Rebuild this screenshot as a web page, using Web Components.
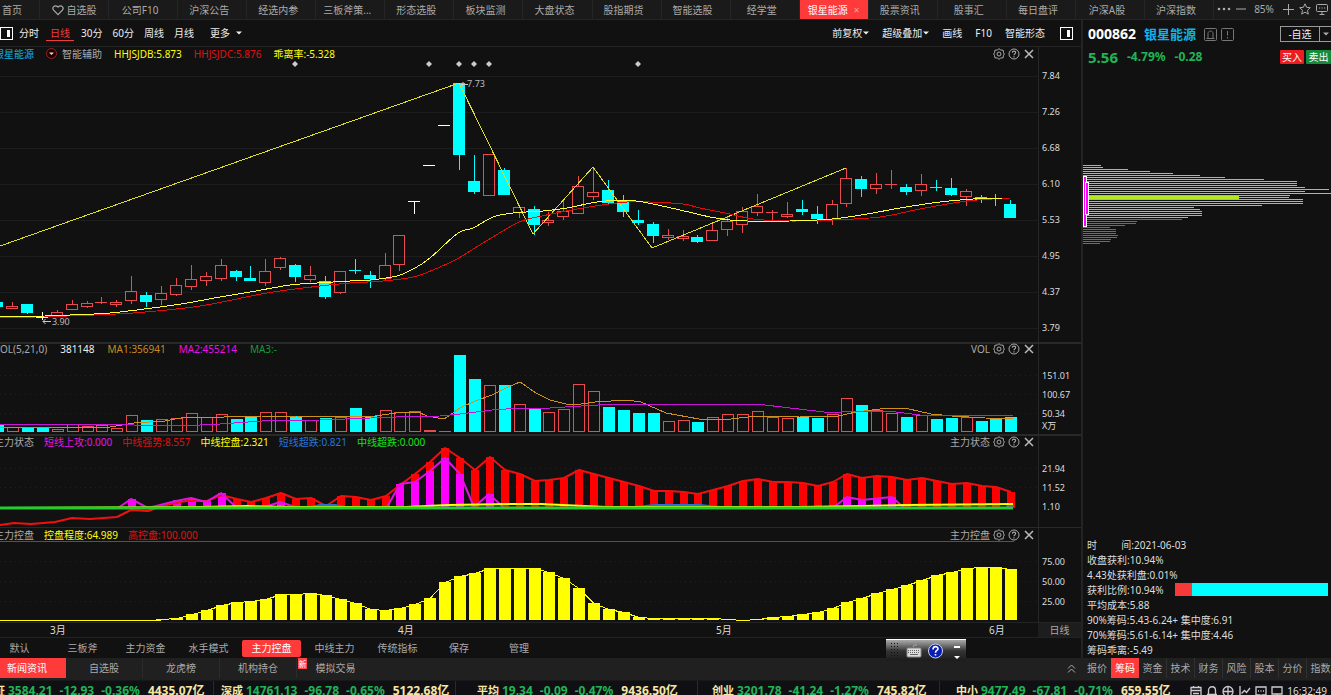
<!DOCTYPE html>
<html lang="zh-CN">
<head>
<meta charset="utf-8">
<title>银星能源 000862</title>
<style>
html,body{height:100%}
body{margin:0;background:#111;color:#aaa;font:10px/12px "Noto Sans","Noto Sans CJK SC",sans-serif;overflow:hidden}
</style>
</head>
<body>
<stock-app></stock-app>
<script>
const BTN='button{font:inherit;color:inherit;background:none;border:0;padding:0;margin:0;white-space:nowrap;cursor:pointer}svg{display:block}';
class Base extends HTMLElement{
  constructor(){super();this.attachShadow({mode:'open'}).innerHTML=`<style>*{box-sizing:border-box}${BTN}${this.css()}</style>${this.html()}`;}
}

/* ---------- top tab strip ---------- */
customElements.define('tab-strip',class extends Base{
  css(){return `:host{display:flex;height:20px;background:#1a1a1a;border-bottom:1px solid #252525;color:#aaa}
  button{flex:1 1 0;min-width:0;display:flex;align-items:center;justify-content:center;gap:3px;border-left:1px solid #252525;overflow:hidden;padding-right:6px}
  button.home{flex:0 0 39px;justify-content:flex-start;padding:0 0 0 2px;border:0}
  button.fav{padding:0 3px}
  button.on{background:#fe3a3a;color:#fff;gap:6px;padding:0 3px}
  .x{color:#f9a5a5}
  .tools{flex:0 0 118px;display:flex;align-items:center;justify-content:space-between;padding:0 3px 2px 3px;border-left:1px solid #252525}
  .zoom{margin-right:4px}`}
  html(){
    const names=['公司F10','沪深公告','经选内参','三板斧策...','形态选股','板块监测','大盘状态','股指期货','智能选股','经学堂','*银星能源','股票资讯','股事汇','每日盘评','沪深A股','沪深指数'];
    return `<button class="home">首页</button><button class="fav"><svg width="12" height="12" viewBox="0 0 12 12" fill="none" stroke="#aaa" stroke-width="1.2"><path d="M6 10.6 1.6 6.2C-.4 3.6 2.400.2 6 3 9.600.2 12.400 3.600 10.400 6.200Z"/></svg>自选股</button>`+
    names.map(n=>n[0]=='*'?`<button class="on">${n.slice(1)}<span class="x">×</span></button>`:`<button>${n}</button>`).join('')+
    `<div class="tools"><svg width="32" height="12" viewBox="0 0 32 12" fill="#aaa"><circle cx="2" cy="6" r="1.300"/><circle cx="7" cy="6" r="1.300"/><circle cx="12" cy="6" r="1.300"/><path d="M19 5.500h10v1H19z"/></svg><span class="zoom">85%</span>
    <svg width="11" height="12" viewBox="0 0 11 12" stroke="#aaa"><path d="M0 6.500h11M5.500 1v11"/></svg>
    <svg width="12" height="12" viewBox="0 0 12 12" fill="none" stroke="#aaa"><path d="M6 .8l1.600 3.500 3.700.4-2.800 2.600.8 3.800L6 9.200l-3.300 1.900.8-3.800L.7 4.700l3.700-.4z"/></svg>
    <svg width="12" height="12" viewBox="0 0 12 12" fill="none" stroke="#aaa"><rect x=".5" y="1.500" width="11" height="7" rx="1"/><path d="M3.500 11.500h5M6 8.500v3M3 5h1.200M5.500 5h1.200M8 5h1.200"/></svg></div>`}
});

/* ---------- period toolbar ---------- */
const SPLIT='<svg width="13" height="13" viewBox="0 0 13 13"><rect x=".5" y=".5" width="12" height="12" fill="none" stroke="#fff"/><path d="M7 3h3v7H7z" fill="#fff"/></svg>';
const CARET='<svg width="6" height="4" viewBox="0 0 6 4"><path d="M0 .5h6L3 3.500z" fill="currentColor"/></svg>';
customElements.define('chart-toolbar',class extends Base{
  css(){return `:host{display:flex;height:27px;align-items:center;background:#111;border-bottom:1px solid #242424;color:#eee;padding-right:8px}
  button{height:15px;margin-right:10px;display:flex;align-items:center;gap:1px}
  .split{margin-right:6px}
  .on{color:#f03c3c;border-bottom:1px solid #f03c3c;padding:0 4px;margin:0 7px 0 -3px}
  .more{gap:6px;margin-left:6px}
  .gap{flex:1}
  .r button{margin:0 0 0 13px}.r{display:flex;align-items:center}
  .r .last{margin-left:15px}`}
  html(){return `<button class="split" aria-label="左侧栏">${SPLIT}</button><button>分时</button><button class="on">日线</button><button>30分</button><button>60分</button><button>周线</button><button>月线</button><button class="more">更多${CARET}</button><span class="gap"></span><span class="r"><button>前复权${CARET}</button><button>超级叠加${CARET}</button><button>画线</button><button>F10</button><button>智能形态</button><button class="last" aria-label="右侧栏">${SPLIT}</button></span>`}
});

/* ---------- a chart panel: legend over a plot, and a value axis ---------- */
customElements.define('chart-panel',class extends Base{
  css(){return `:host{display:grid;grid-template-columns:minmax(0,1fr) 43px;flex:none;min-height:0;border-top:var(--rule,0) solid #292929}
  .plot,.head{grid-area:1/1;min-width:0;min-height:0}
  .plot{display:flex}
  .head{display:flex;height:var(--head,13px);justify-content:space-between;z-index:1;padding-right:3px}
  .legend{display:flex;align-items:center;gap:var(--gap,10px);margin-left:-6px;white-space:nowrap}
  .tools{display:flex;align-items:center;gap:3px}
  .axis{grid-area:1/2;border-left:1px solid #272727;padding-left:3px;color:#ddd;font-size:9px;overflow:hidden}`}
  html(){return `<div class="plot"><slot></slot></div><div class="head"><div class="legend"><slot name="legend"></slot></div><div class="tools"><slot name="name"></slot>
  <button aria-label="设置"><svg width="12" height="12" viewBox="0 0 12 12" fill="none" stroke="#aaa"><path d="M6 .7l1.500 1.200 2.700.4.4 2.400L11.300 6l-.8 1.500-.4 2.300-2.500.3L6 11.300l-1.500-1.200-2.600-.3-.4-2.300L.7 6l.8-1.300.4-2.400 2.600-.4z"/><circle cx="6" cy="6" r="2"/></svg></button>
  <button aria-label="帮助"><svg width="12" height="12" viewBox="0 0 12 12" fill="none" stroke="#aaa"><circle cx="6" cy="6" r="5"/><path d="M4.300 4.700C4.300 2.500 7.700 2.600 7.700 4.600 7.700 5.800 6 5.800 6 7.200M6 8.200v1.200" stroke-width="1.100"/></svg></button>
  <button aria-label="关闭"><svg width="12" height="12" viewBox="0 0 12 12" stroke="#bbb" stroke-width="1.500"><path d="M2 2l8 8M10 2l-8 8"/></svg></button></div></div><div class="axis"><slot name="axis"></slot></div>`}
});

/* Trading days are 14.9 units apart; day 0 is the 7.73 peak. */
const X=k=>Math.round(459+14.9*k);
/* kind, high, body top, body bottom, low */
const CANDLES=`C302,302,307,307 R302,306,309,309 C304,304,313,314 W312,317,317,320 R310,312,317,317 R300,304,310,310 R301,303,307,308 R297,302,303,304 R300,302,305,307 R276,291,301,304 C292,295,302,307 R286,293,300,305 R278,285,295,296 R265,279,287,290 R272,276,281,286 R259,265,279,281 C270,271,277,281 C266,278,281,281 R259,271,283,286 R257,258,268,270 C264,265,277,282 R266,275,280,282 C276,281,297,299 R271,271,293,294 C259,270,271,274 C271,275,279,288 R253,265,279,281 R235,235,265,271 W201,201,202,214 W165,165,166,166 W125,125,126,126 C83,83,155,170 C155,181,192,194 R154,154,196,196 C168,170,195,195 R206,207,213,218 C206,209,225,235 R212,220,223,226 R199,211,217,220 R176,186,214,214 R168,192,197,200 C180,190,203,205 C195,200,212,217 C210,220,223,225 C222,224,236,243 R229,235,238,240 R230,236,239,241 C235,237,242,243 R223,230,241,241 R217,221,230,236 R207,211,225,233 R194,206,213,216 R210,212,213,221 R202,214,217,218 C200,209,212,215 C206,214,219,224 R200,204,220,225 R168,178,204,207 C176,179,189,197 R173,184,189,194 R170,184,185,189 C184,187,192,195 R174,184,191,196 C180,187,188,191 C178,188,195,196 R189,191,197,206 C195,197,200,203 C194,198,199,206 C200,204,218,218`.split(' ').map((s,i)=>[i-31,s[0],...s.slice(1).split(',').map(Number)]);
const VOL='C425 R427 C427 C428 R429 R424 R426 R425 R428 R415 C420 R419 R418 R413 R417 R414 C419 C417 R412 R412 C416 R420 C418 R417 C408 C416 R410 R412 R411 R430 R431 C355 C379 R385 C385 R404 C409 R412 R409 R384 R391 C407 C410 C413 C413 R421 R420 C422 R417 R414 R414 R411 R417 R418 C417 C418 R414 R398 C405 R410 R413 C417 R415 C419 C418 R417 C421 C419 C417'.split(' ').map((s,i)=>[i-31,s[0],+s.slice(1)]);
const STRONG=[499,502,498,493,499,498,506,496,497,500,496,485,474,462,448,458,470,457,470,474,481,480,478,470,474,478,482,486,491,491,492,494,490,486,481,479,482,482,483,486,482,474,478,476,477,480,478,481,484,483,486,487,492];
const ATTACK={'-22':499,'-19':500,'-18':498,'-17':501,'-16':493,'-12':502,'-4':484,'-3':482,'-2':471,'-1':458,0:474,2:494,26:497,27:500,28:499,29:497};
const CTRL=[619,618,614,610,605,602,601,599,594,594,593,595,599,603,609,610,608,604,598,582,576,573,568,568,568,568,572,578,588,603,609,612,617,618,618,618,618,618,619,620,619,617,616,614,612,608,602,598,593,589,585,580,575,572,568,567,567,569];
const R=(x,y,w,h,f)=>`<rect x="${x}" y="${y}" width="${w}" height="${h}" fill="${f}"/>`;
const H=(x,y,w,c)=>`<path d="M${x} ${y}.5h${w}" fill="none" stroke="${c}"/>`;
const O=(x,y,w,h)=>h<2?R(x,y,w,1,'#e84a4f'):`<rect x="${x+.5}" y="${y+.5}" width="${w-1}" height="${h-1}" fill="none" stroke="#e84a4f"/>`;
const L=(p,c,w=1)=>`<polyline points="${p}" fill="none" stroke="${c}" stroke-width="${w}" stroke-linejoin="round"/>`;
/* smooth curve through the points (Catmull-Rom) */
const S=(p,c)=>{const q=p.split(' ').map(v=>v.split(',').map(Number));let d='M'+q[0];
  for(let i=0;i<q.length-1;i++){const a=q[i-1]||q[i],b=q[i],e=q[i+1],f=q[i+2]||e;
    d+=`C${b[0]+(e[0]-a[0])/6} ${b[1]+(e[1]-a[1])/6} ${e[0]-(f[0]-b[0])/6} ${e[1]-(f[1]-b[1])/6} ${e}`;}
  return `<path d="${d}" fill="none" stroke="${c}"/>`;};
const G=(ys,d)=>ys.map(y=>`<path d="M0 ${y}.5H1038" stroke="${d?'#202020':'#1d1d1d'}" ${d?'stroke-dasharray="1 4"':''}/>`).join('');
const PLOTS={
  price(){
    let s=G([76,112,148,184,220,256,292,328]);
    for(const [k,t,h,a,b,l] of CANDLES){const x=X(k),c=t=='C'?'#0ff':t=='W'?'#fff':'#e84a4f';
      if(t=='R'){s+=(a>h?R(x,h,1,a-h,c):'')+(l>b?R(x,b,1,l-b,c):'')+O(x-6,a,12,b-a);}
      else s+=R(x,h,1,Math.max(1,l-h),c)+R(x-6,a,12,Math.max(1,b-a),c);}
    s=`<g shape-rendering="crispEdges">${s}${L('0,246 459,83 533,234 593,167 652,248 846,168','#dede28')}
    ${S('0,318 67,316 133,313 200,306 267,293 320,286 350,283 383,281 413,277 433,270 457,259 483,243 517,223 537,217 583,208 627,202 650,202 683,204 700,208 730,214 753,219 790,221 832,220 880,217 920,209 967,201 1010,198','#e00c0c')}
    ${S('0,316 45,316 70,315 110,313 160,307 187,303 220,297 250,292 290,285 317,283 350,281 370,280 397,276 415,268 430,258 458,233 473,228 493,217 513,213 543,211 567,208 597,202 623,200 643,202 680,210 710,217 730,220 747,221 790,221 832,219 867,214 900,208 940,202 973,199 1002,198','#ff3')}
    </g>`;
    for(const x of [295,429,459,474,489,638])s+=`<path d="M${x} 61l3 3-3 3-3-3z" fill="#ccc"/>`;
    return s+`<path d="M461 84.500h7M463.500 82l-2.500 2.500 2.500 2.500M43 321.500h8M45.500 319l-2.500 2.500 2.500 2.500" stroke="#ccc" fill="none"/>`;
  },
  vol(){
    let s=G([375,394,413],1);
    for(const [k,t,y] of VOL)s+=t=='C'?R(X(k)-5,y,12,432-y,'#0ff'):O(X(k)-5,y,12,432-y);
    return `<g shape-rendering="crispEdges">${s}`+L('0,427 60,427 110,427 134,423 165,421 186,417 224,417 262,416 296,416 334,417 375,416 396,413 418,412 427,416 444,419 460,408 475,401 492,395 508,387 520,382 536,393 550,400 566,404 581,404 595,402 627,400 641,402 666,413 699,419 731,419 756,416 799,416 834,417 856,412 888,408 909,409 931,414 952,416 1002,419 1013,418','#d09020')+
    L('0,424 124,424 134,425 200,425 220,424 262,421 320,420 396,417 440,416 460,414 492,410 520,408 550,408 581,406 616,404 680,404 757,404 790,408 824,412 841,412 860,411 888,411 920,415 1013,415','#c815d8')+'</g>';
  },
  state(){
    let s=G([468,487],1);
    STRONG.forEach((y,i)=>{const k=i-15;if(k!=-9)s+=R(X(k)-3,y,8,508-y,'#f00')});
    for(const k in ATTACK)s+=R(X(+k)-3,ATTACK[k],8,508-ATTACK[k],'#f0f');
    s=`<g shape-rendering="crispEdges">${s}</g>`;
    s+=L('0,525 14,523 31,524 55,522 72,518 90,519 117,517 131,510 148,511 162,506 186,501 207,501 221,495 '+STRONG.map((y,i)=>X(i-15)+1+','+y).join(' '),'#f01010',2);
    s+=L('118,508 131,499 148,508 176,501 191,498 206,502 221,493 236,507','#e012e0',2)+L('265,507 280,502 295,507','#e012e0',2)+L('387,507 400,484 415,482 430,471 445,458 460,474 474,507 489,494 503,507','#e012e0',2)+L('834,507 847,497 862,500 892,497 903,507','#e012e0',2);
    s+=L('310,507 320,505 335,505 345,507','#2a70d8',2)+L('635,507 656,505 699,505 720,507','#2a70d8',2);
    s+=L('0,508 200,507 248,506 290,507 406,507 448,505 510,504 541,504 584,506 606,507 800,507 863,506 906,505 1013,504','#ff0',2);
    return s+L('0,508 1013,508','#2c3',3)+L('1006,506 1014,506','#2a90d8',1);
  },
  ctrl(){
    let s=G([561,581,601],1)+H(0,541,1014,'#f01010');
    CTRL.forEach((y,i)=>{const k=i-20;s+=R(X(k)-5,y,12,620-y,'#ff0')});
    s+=L('0,620.5 150,620.5 '+CTRL.map((y,i)=>X(i-20)+1+','+(y+.5)).join(' '),'#ff0')+R(0,620,161,1,'#ff0');
    return `<g shape-rendering="crispEdges">${s}</g>`;
  },
  chips(){
    let s='';
    const ends=[74,80,156,222,290,371,447,563,662,662,662,686,760,686,765,642,638,680,680,680,559,355,371,378,378,378,335,318,184,180,146,102,119,119,119,126,124,104,102,72];
    ends.forEach((e,i)=>{s+=H(0,165+2*i,Math.round((e-21)/3),i<27?'#38e4e0':'#e03a3a')});
    s+=R(5,196,151,3,'#b4e628')+R(0,176,4,51,'#fff')+R(1,177,2,49,'#f0f')+R(2,182,4,33,'#fff')+R(3,183,2,31,'#f0f');
    return `<g shape-rendering="crispEdges">${s}</g>`;
  }
};
const BOX={price:'0 47 1038 295',vol:'0 344 1038 90',state:'0 436 1038 91',ctrl:'0 528 1038 94',chips:'0 66 248 472'};
customElements.define('stock-plot',class extends HTMLElement{
  connectedCallback(){
    if(this.shadowRoot)return;const k=this.getAttribute('kind');
    this.attachShadow({mode:'open'}).innerHTML=`<style>:host{display:block;flex:1;min-width:0;min-height:0;overflow:hidden}svg{display:block;width:100%;height:100%}</style><svg viewBox="${BOX[k]}" preserveAspectRatio="none">${PLOTS[k]()}</svg>`;
  }
});

/* ---------- quote side panel ---------- */
customElements.define('quote-panel',class extends Base{
  css(){return `:host{display:flex;flex-direction:column;flex:0 0 250px;border-left:2px solid #242424;min-height:0;overflow:hidden}
  .row{display:flex;align-items:center;padding-left:5px;flex:none}
  .a{height:28px}.b{height:18px}
  .code{font-size:14px;font-weight:700;color:#fff;margin-right:8px}
  .name{font-size:13px;font-weight:700;color:#10b4e6;margin-right:8px}
  .a svg.i{margin-right:4px}
  .gap{flex:1}
  .fav{border:1px solid #999;height:16px;width:40px;color:#eee}
  .drop{border:1px solid #999;border-left:0;border-right:0;height:16px;width:11px;display:flex;align-items:center;justify-content:center;color:#aaa}
  .b{color:#1fb556;font-weight:700;font-size:12px}
  .p{font-size:15px;margin-right:9px}.q{margin-right:9px}
  .buy,.sell{font-size:10px;font-weight:400;color:#fff;height:14px;width:24px;background:#ec1c20;border-radius:1px}
  .sell{background:#178a3c;width:25px;margin-left:2px}
  dl{margin:-1px 0 0;padding:0 0 1px 4px;color:#ddd;flex:none}
  dl div{display:flex;height:15px;align-items:center;white-space:nowrap}
  dt,dd{margin:0}
  .wide{display:flex;justify-content:space-between;width:47px}
  .bar{flex:1;height:13px;margin:0 3px 0 11px;background:linear-gradient(90deg,#f63a3a 11%,#0ff 11%)}`}
  html(){return `<div class="row a"><span class="code">000862</span><span class="name">银星能源</span>
  <svg class="i" width="13" height="13" viewBox="0 0 13 13" fill="none" stroke="#777"><rect x=".5" y=".5" width="12" height="12" rx="1"/><path d="M2.500 10.500h8M4 10V5.500c0-3.300 5-3.300 5 0V10"/></svg>
  <svg class="i" width="13" height="13" viewBox="0 0 13 13" fill="none" stroke="#777"><rect x=".5" y=".5" width="12" height="12" rx="1"/><path d="M6.500 3v4.500M6.500 9v1.500"/></svg>
  <span class="gap"></span><button class="fav">-自选</button><button class="drop" aria-label="更多自选">${CARET}</button></div>
  <div class="row b"><span class="p">5.56</span><span class="q">-4.79%</span><span>-0.28</span><span class="gap"></span><button class="buy">买入</button><button class="sell">卖出</button></div>
  <stock-plot kind="chips"></stock-plot>
  <dl><div><dt class="wide"><span>时</span><span>间:</span></dt><dd>2021-06-03</dd></div>
  <div><dt>收盘获利:</dt><dd>10.94%</dd></div><div><dt>4.43处获利盘:</dt><dd>0.01%</dd></div>
  <div><dt>获利比例:</dt><dd>10.94%</dd><dd class="bar"></dd></div>
  <div><dt>平均成本:</dt><dd>5.88</dd></div><div><dt>90%筹码:</dt><dd>5.43-6.24+ 集中度:6.91</dd></div>
  <div><dt>70%筹码:</dt><dd>5.61-6.14+ 集中度:4.46</dd></div><div><dt>筹码乖离:</dt><dd>-5.49</dd></div></dl>`}
});

/* ---------- indicator presets with the floating input-method bar ---------- */
customElements.define('preset-tabs',class extends Base{
  css(){return `:host{display:flex;position:relative;height:21px;align-items:center;gap:4px;border-top:1px solid #222;padding-right:4px}
  button{width:59px;height:17px;border-radius:2px}button:first-of-type{margin-left:-10px}
  button.n{width:56px}.on{background:#fe3a3a;color:#fff}
  .ime{position:absolute;right:115px;top:1px;width:80px;height:22px;z-index:2;background:linear-gradient(#fff 0 1px,#aaa 1px,#777 6px,#333 12px,#1c1c1c)}`}
  html(){return ['默认','三板斧','主力资金','水手模式','*主力控盘','中线主力','传统指标','保存','管理'].map((n,i)=>`<button class="${n[0]=='*'?'on':i>6?'n':''}">${n.replace('*','')}</button>`).join('')+
  `<div class="ime"><svg width="80" height="22" viewBox="0 0 80 22"><path d="M5.500 4v18M8.500 4v18M11.500 4v18" stroke="#111" stroke-dasharray="1 2"/><rect x="21" y="9" width="14" height="9" rx="1" fill="#ddd" stroke="#888"/><path d="M22 11.500h12M22 13.500h12" stroke="#666" stroke-dasharray="1 1"/><path d="M24 15.500h8" stroke="#666"/><path d="M27 8q1-3 4-2" stroke="#aaa" fill="none"/><circle cx="49.500" cy="12" r="7" fill="#0a1eb4" stroke="#c8d4f0"/><path d="M47 10.500c0-4 5-3.500 5-.8 0 1.800-2.500 1.800-2.500 4M49.500 15v1.600" stroke="#fff" stroke-width="1.600" fill="none"/><path d="M68 7h6v2h-6zM68 17h6l-3 3z" fill="#fff"/></svg></div>`}
});

/* ---------- news tabs and side tabs ---------- */
customElements.define('news-tabs',class extends Base{
  css(){return `:host{display:flex;height:22px;background:#202020;flex:none;overflow:hidden}
  .l{display:flex;flex:1;margin-left:-11px}
  .l button{width:77px;border-right:1px solid #2b2b2b;height:20px}
  .l button:nth-of-type(5){border:0;position:relative}
  .l .on{border-color:#fe3a3a}
  .on{background:#fe3a3a;color:#fff}
  .new{position:absolute;left:1px;top:0;width:9px;height:11px;background:#f44;color:#fff;font-size:8px;line-height:11px}
  .up{padding:0 7px;height:20px}
  .r{display:flex;flex:0 0 248px;overflow:hidden}
  .r button{flex:0 0 28px;border-right:1px solid #303030;height:20px}.r button:first-child,.r .on{border-right:0}`}
  html(){return `<div class="l"><button class="on">新闻资讯</button><button>自选股</button><button>龙虎榜</button><button>机构持仓</button><button><span class="new">新</span>模拟交易</button></div>
  <button class="up" aria-label="展开"><svg width="9" height="9" viewBox="0 0 9 9" fill="none" stroke="#aaa"><path d="M1 4.500l3.500-3.500L8 4.500M1 8.500l3.500-3.500L8 8.500"/></svg></button>
  <div class="r"><button>报价</button><button class="on">筹码</button>${['资金','技术','财务','风险','股本','分价','指数'].map(n=>`<button>${n}</button>`).join('')}</div>`}
});

/* ---------- index ticker ---------- */
customElements.define('index-ticker',class extends Base{
  css(){return `:host{display:flex;flex:none;height:15px;overflow:hidden;background:#101014;border-top:1px solid #181818}
  .g{display:flex;flex:var(--w) 1 0;gap:7px;padding-left:var(--p);border-left:1px solid #2a2a2a;white-space:nowrap;font-size:12px;font-weight:700;line-height:20px;color:#1fb556;min-width:0}
  .g:first-of-type{border:0;margin-left:-17px}
  .n{font-size:11px;color:#f6e7a6;margin-right:-4px}.v{color:#f6e7a6;margin-left:1px}
  .end{display:flex;flex:0 0 146px;align-items:flex-start;justify-content:space-between;padding:4px 4px 0 5px}
  time{color:#ddd;line-height:12px}`}
  html(){
    const g=[['上证','3584.21','-12.93','-0.36%','4435.07亿',230,0],['深成','14761.13','-96.78','-0.65%','5122.68亿',234,7],['平均','19.34','-0.09','-0.47%','9436.50亿',220,21],['创业','3201.78','-41.24','-1.27%','745.82亿',227,14],['中小','9477.49','-67.81','-0.71%','659.55亿',229,16]];
    const ic=['<path d="M1 2.500h10v9H1zM1 5.500h10M3.500 1v2M8.500 1v2M3 8.500h6"/>','<path d="M1 9.500h10M2.500 9V5.500c0-5 7-5 7 0V9M5 11.500h2"/>','<circle cx="6" cy="6.500" r="5"/><path d="M1 6.500h10M6 1.500v10"/>','<path d="M1 1v10.500h10M2.500 8.500l3-3 2 2L11 3"/>','<path d="M1 2h10v8H7l-1 1.500L5 10H1zM3 6h1M5.500 6h1M8 6h1"/>','<path d="M1 2h10v7H1zM4 11.500h4M6 9v2.500"/>'];
    return g.map(r=>`<div class="g" style="--w:${r[5]};--p:${r[6]}px"><span class="n">${r[0]}</span><span>${r[1]}</span><span>${r[2]}</span><span>${r[3]}</span><span class="v">${r[4]}</span></div>`).join('')+
    `<div class="end">${ic.map(p=>`<svg width="12" height="13" viewBox="0 0 12 13" fill="none" stroke="#ccc" stroke-width="1.300">${p}</svg>`).join('')}<time>16:32:49</time></div>`}
});

/* ---------- application shell ---------- */
customElements.define('stock-app',class extends Base{
  css(){return `:host{display:flex;flex-direction:column;height:100vh;min-height:600px}
  .main{display:flex;flex:1;min-height:0}
  .left{flex:1;min-width:0;display:flex;flex-direction:column}
  .p1{flex:1 1 0;--gap:12px}.p2{--rule:2px;--head:10px;--gap:13px;height:92px}.p3{--rule:2px;--head:12px;height:93px}.p4{--rule:1px;height:95px}
  .tag{margin-right:-7px}
  .y{color:#ff0}.r{color:#e01010}.m{color:#e812e8}.b{color:#2277dd}.g{color:#18e018}.w{color:#eee}.o{color:#c88a20}.dg{color:#199a3c}.c{color:#10b4e0}
  .ax{display:flex;flex-direction:column}
  .ax1{line-height:36px;padding-top:11px}
  .ax2{gap:7px;padding-top:26px}.ax3{gap:7px;padding-top:27px}.ax4{gap:8px;padding-top:28px}
  .stack{display:grid;flex:1;min-width:0;min-height:0;position:relative}
  .stack stock-plot{grid-area:1/1}
  .mark{position:absolute;color:#bbb;font-size:9px;line-height:12px}
  .hi{left:45%;top:31px}.lo{left:5%;top:269px}
  .dates{display:grid;grid-template-columns:50fr 348fr 318fr 273fr 49fr 43px;height:15px;border-top:1px solid #242424;color:#ddd;line-height:15px}
  .dates b{font-weight:400;background:#1d1d1d;color:#aaa;text-align:center}`}
  html(){
    const ax=a=>a.map(t=>`<span>${t}</span>`).join('');
    const lg=a=>a.map(([c,t])=>`<span slot="legend" class="${c}">${t}</span>`).join('');
    return `<tab-strip></tab-strip><div class="main"><div class="left"><chart-toolbar></chart-toolbar>
    <chart-panel class="p1"><div class="stack"><stock-plot kind="price"></stock-plot><span class="mark hi">7.73</span><span class="mark lo">3.90</span></div>
    <span slot="legend" class="c">银星能源</span><svg slot="legend" class="tag" width="11" height="11" viewBox="0 0 11 11"><circle cx="5.500" cy="5.500" r="5" fill="#200" stroke="#a02020"/><path d="M3 4.500h5l-2.500 2.500z" fill="#ddd"/></svg>${lg([['','智能辅助'],['y','HHJSJDB:5.873'],['r','HHJSJDC:5.876'],['y','乖离率:-5.328']])}
    <div slot="axis" class="ax ax1">${ax(['7.84','7.26','6.68','6.10','5.53','4.95','4.37','3.79'])}</div></chart-panel>
    <chart-panel class="p2"><stock-plot kind="vol"></stock-plot>${lg([['','VOL(5,21,0)'],['w','381148'],['o','MA1:356941'],['m','MA2:455214'],['dg','MA3:-']])}<span slot="name">VOL</span><div slot="axis" class="ax ax2">${ax(['151.01','100.67','50.34<br>X万'])}</div></chart-panel>
    <chart-panel class="p3"><stock-plot kind="state"></stock-plot>${lg([['','主力状态'],['m','短线上攻:0.000'],['r','中线强势:8.557'],['y','中线控盘:2.321'],['b','短线超跌:0.821'],['g','中线超跌:0.000']])}<span slot="name">主力状态</span><div slot="axis" class="ax ax3">${ax(['21.94','11.52','1.10'])}</div></chart-panel>
    <chart-panel class="p4"><stock-plot kind="ctrl"></stock-plot>${lg([['','主力控盘'],['y','控盘程度:64.989'],['r','高控盘:100.000']])}<span slot="name">主力控盘</span><div slot="axis" class="ax ax4">${ax(['75.00','50.00','25.00'])}</div></chart-panel>
    <div class="dates"><span></span><span>3月</span><span>4月</span><span>5月</span><span>6月</span><b>日线</b></div>
    <preset-tabs></preset-tabs></div><quote-panel></quote-panel></div><news-tabs></news-tabs><index-ticker></index-ticker>`}
});
</script>
</body>
</html>
